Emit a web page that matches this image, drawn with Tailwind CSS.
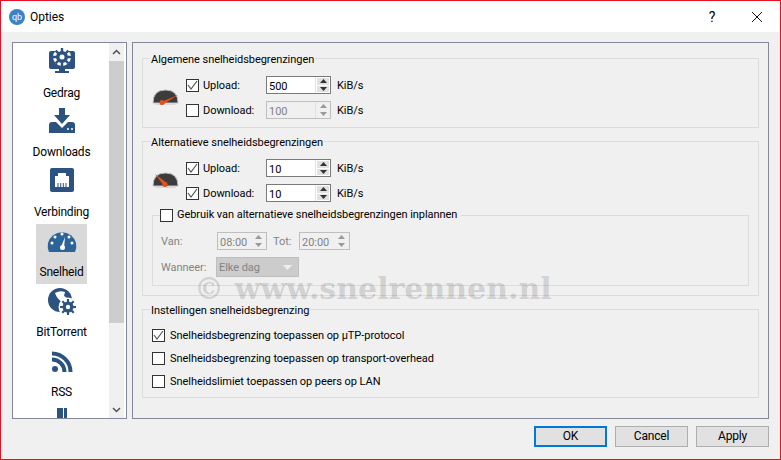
<!DOCTYPE html>
<html lang="nl">
<head>
<meta charset="UTF-8" />
<title>Opties</title>
<script src="https://cdn.jsdelivr.net/npm/@tailwindcss/browser@4"></script>
</head>
<body class="w-[781px] h-[460px] overflow-hidden font-['Roboto','Liberation_Sans',sans-serif] text-[11px] tracking-[-0.05px] leading-[16px] text-black">
<div class="relative w-[781px] h-[460px] border border-[#e81123] bg-[#f0f0f0] flex flex-col">

  <!-- title bar -->
  <div class="h-[31px] bg-white flex items-center shrink-0">
    <div class="ml-[8px] w-[16px] h-[16px] rounded-full bg-[#3b82c9] text-white text-[9px] leading-[16px] text-center">qb</div>
    <span class="ml-[5px] text-[12px]">Opties</span>
    <span class="ml-auto text-[14px] w-[20px] text-center">?</span>
    <svg class="ml-[29px] mr-[17px]" width="12" height="12" viewBox="0 0 12 12"><path d="M1 1 L11 11 M11 1 L1 11" stroke="#111" stroke-width="1" fill="none"/></svg>
  </div>

  <div class="flex-1 flex flex-col pt-[10px] pl-[11px] pr-[11px] pb-[12px]">
    <div class="h-[377px] flex gap-[5px]">

      <!-- category list -->
      <div class="w-[115px] h-full border border-[#82879a] bg-white flex overflow-hidden">
        <div class="w-[96px] pl-[23px] pt-[1px] h-full overflow-hidden text-[12px] tracking-[-0.2px]">
          <div class="w-[51px] h-[60px] flex flex-col items-center">
            <svg class="mt-[2px]" width="28" height="28" viewBox="0 0 28 28"><rect x="1" y="5" width="26" height="18" rx="2" fill="#2c5380"/><rect x="11" y="23" width="6" height="3" fill="#2c5380"/><rect x="7" y="25" width="14" height="2" fill="#2c5380"/><circle cx="14" cy="11" r="9" fill="#fff"/><path d="M14 2 V20 M5 11 H23 M7.600 4.600 L20.400 17.400 M20.400 4.600 L7.600 17.400" stroke="#2c5380" stroke-width="2.400"/><circle cx="14" cy="11" r="6" fill="#2c5380"/><circle cx="14" cy="11" r="2.500" fill="#fff"/></svg>
            <span class="mt-[11px]">Gedrag</span>
          </div>
          <div class="w-[51px] h-[60px] flex flex-col items-center">
            <svg class="mt-[4px]" width="28" height="26" viewBox="0 0 28 26"><path d="M11 0 H17 V7 H22 L14 16 L6 7 H11 Z" fill="#2c5380"/><path d="M1 17 Q1 14 4 14 H8 L14 20 L20 14 H24 Q27 14 27 17 V25 H1 Z" fill="#2c5380"/><circle cx="20" cy="21" r="1" fill="#fff"/><circle cx="24" cy="21" r="1" fill="#fff"/></svg>
            <span class="mt-[10px] whitespace-nowrap">Downloads</span>
          </div>
          <div class="w-[51px] h-[60px] flex flex-col items-center">
            <svg class="mt-[3px]" width="26" height="26" viewBox="0 0 26 26"><rect x="1" y="1" width="24" height="24" rx="2" fill="#2c5380"/><path d="M6 9 H9 V6 H17 V9 H20 V20 H6 Z" fill="#fff"/><path d="M9 16 V20 M11.700 16 V20 M14.300 16 V20 M17 16 V20" stroke="#2c5380" stroke-width="1"/></svg>
            <span class="mt-[11px] whitespace-nowrap">Verbinding</span>
          </div>
          <div class="w-[51px] h-[60px] flex flex-col items-center bg-[#d9d9d9]">
            <svg class="mt-[5px]" width="30" height="24" viewBox="0 0 30 24"><path d="M2 23 Q0 19 1 14 A14.500 14.500 0 0 1 29 14 Q30 19 28 23 Z" fill="#2c6399"/><circle cx="15" cy="5" r="1.500" fill="#fff"/><circle cx="8" cy="8" r="1.500" fill="#fff"/><circle cx="22" cy="8" r="1.500" fill="#fff"/><circle cx="5" cy="14" r="1.500" fill="#fff"/><circle cx="25" cy="14" r="1.500" fill="#fff"/><path d="M14 18 L18 8 L17 19 Z" fill="#fff"/><circle cx="15.500" cy="18.500" r="2.500" fill="#fff"/></svg>
            <span class="mt-[11px]">Snelheid</span>
          </div>
          <div class="w-[51px] h-[60px] flex flex-col items-center">
            <svg class="mt-[3px]" width="30" height="30" viewBox="0 0 30 30"><circle cx="13" cy="13" r="12" fill="#2c5380"/><path d="M8 6 Q13 3 18 5 L17 9 Q20 10 21 14 L15 15 Q10 12 8 6 Z" fill="#fff"/><circle cx="21" cy="20" r="9.500" fill="#fff"/><path d="M21 12 V28 M13 20 H29 M15.300 14.300 L26.700 25.700 M26.700 14.300 L15.300 25.700" stroke="#2c5380" stroke-width="2.200"/><circle cx="21" cy="20" r="5.500" fill="#2c5380"/><circle cx="21" cy="20" r="2.200" fill="#fff"/></svg>
            <span class="mt-[7px] whitespace-nowrap">BitTorrent</span>
          </div>
          <div class="w-[51px] h-[60px] flex flex-col items-center">
            <svg class="mt-[6px]" width="24" height="24" viewBox="0 0 24 24"><circle cx="5" cy="19" r="3" fill="#2c5380"/><path d="M2 9.500 A12.500 12.500 0 0 1 14.500 22 M2 3.500 A18.500 18.500 0 0 1 20.500 22" fill="none" stroke="#2c5380" stroke-width="4"/></svg>
            <span class="mt-[10px]">RSS</span>
          </div>
          <div class="w-[51px] h-[12px] flex justify-center">
            <svg class="mt-[4px]" width="12" height="12" viewBox="0 0 12 12"><rect x="1" y="0" width="10" height="12" fill="#2c5380"/><rect x="7" y="0" width="1" height="12" fill="#fff"/></svg>
          </div>
        </div>
        <!-- scrollbar -->
        <div class="w-[15px] h-full bg-[#f0f0f0] flex flex-col">
          <div class="h-[18px] flex items-center justify-center"><svg width="9" height="6" viewBox="0 0 9 6"><path d="M1 5 L4.500 1.500 L8 5" stroke="#505050" stroke-width="1.500" fill="none"/></svg></div>
          <div class="h-[262px] bg-[#cdcdcd]"></div>
          <div class="flex-1"></div>
          <div class="h-[17px] flex items-center justify-center"><svg width="9" height="6" viewBox="0 0 9 6"><path d="M1 1 L4.500 4.500 L8 1" stroke="#505050" stroke-width="1.500" fill="none"/></svg></div>
        </div>
      </div>

      <!-- settings page -->
      <div class="w-[637px] h-full border border-[#82879a] px-[9px] pt-[7px] flex flex-col gap-[5px]">

        <fieldset class="border border-[#dcdcdc] pb-[8px]">
          <legend class="ml-[7px] px-[1px] h-[16px] leading-[19px]">Algemene snelheidsbegrenzingen</legend>
          <div class="flex items-center pt-[10px] pl-[9px]">
            <svg width="27" height="18" viewBox="0 1 27 18"><path d="M1 15 Q1 2 13.500 2 Q26 2 26 15 Z" fill="#3c3c3c" stroke="#bdbdbd"/><path d="M2 15 H25 Q24 17 22 17 H5 Q3 17 2 15 Z" fill="#d8d8d8"/><path d="M9 14 L26 7 L11 16.500 Z" fill="#e2511c"/><circle cx="10" cy="14.500" r="2.500" fill="#e2511c"/></svg>
            <div class="ml-[7px] flex flex-col gap-[7px]">
              <div class="flex items-center h-[18px]">
                <div class="w-[13px] h-[13px] border border-[#333] bg-white"><svg width="11" height="11" viewBox="0 0 11 11"><path d="M1 5 L4 9 L10 1" stroke="#555" stroke-width="1.200" fill="none"/></svg></div>
                <span class="ml-[4px] w-[63px] pt-[1px]">Upload:</span>
                <div class="w-[65px] h-[18px] border border-[#7a7a7a] bg-white flex">
                  <span class="flex-1 pl-[2px] leading-[19px]">500</span>
                  <div class="w-[15px] flex flex-col gap-[1px] p-[1px] border-l border-[#e1e1e1]">
                    <div class="flex-1 bg-[#e1e1e1] flex items-center justify-center"><svg width="7" height="4" viewBox="0 0 7 4"><path d="M0 4 L3.500 0 L7 4 Z" fill="#333"/></svg></div>
                    <div class="flex-1 bg-[#e1e1e1] flex items-center justify-center"><svg width="7" height="4" viewBox="0 0 7 4"><path d="M0 0 L3.500 4 L7 0 Z" fill="#333"/></svg></div>
                  </div>
                </div>
                <span class="ml-[6px] pt-[2px]">KiB/s</span>
              </div>
              <div class="flex items-center h-[18px]">
                <div class="w-[13px] h-[13px] border border-[#333] bg-white"></div>
                <span class="ml-[4px] w-[63px] pt-[1px]">Download:</span>
                <div class="w-[65px] h-[18px] border border-[#bfbfbf] bg-[#f0f0f0] flex">
                  <span class="flex-1 pl-[2px] leading-[19px] text-[#838383]">100</span>
                  <div class="w-[15px] flex flex-col gap-[1px] p-[1px] border-l border-[#e1e1e1]">
                    <div class="flex-1 flex items-center justify-center"><svg width="7" height="4" viewBox="0 0 7 4"><path d="M0 4 L3.500 0 L7 4 Z" fill="#999"/></svg></div>
                    <div class="flex-1 flex items-center justify-center"><svg width="7" height="4" viewBox="0 0 7 4"><path d="M0 0 L3.500 4 L7 0 Z" fill="#999"/></svg></div>
                  </div>
                </div>
                <span class="ml-[6px] pt-[2px]">KiB/s</span>
              </div>
            </div>
          </div>
        </fieldset>

        <fieldset class="border border-[#dcdcdc] pb-[9px]">
          <legend class="ml-[7px] px-[1px] h-[16px] leading-[19px]">Alternatieve snelheidsbegrenzingen</legend>
          <div class="flex items-center pt-[10px] pl-[9px]">
            <svg width="27" height="18" viewBox="0 1 27 18"><path d="M1 15 Q1 2 13.500 2 Q26 2 26 15 Z" fill="#3c3c3c" stroke="#bdbdbd"/><path d="M2 15 H25 Q24 17 22 17 H5 Q3 17 2 15 Z" fill="#d8d8d8"/><path d="M3 3 L15 12 L12 15 Z" fill="#e2511c"/><circle cx="13" cy="13.500" r="2.500" fill="#e2511c"/></svg>
            <div class="ml-[7px] flex flex-col gap-[7px]">
              <div class="flex items-center h-[18px]">
                <div class="w-[13px] h-[13px] border border-[#333] bg-white"><svg width="11" height="11" viewBox="0 0 11 11"><path d="M1 5 L4 9 L10 1" stroke="#555" stroke-width="1.200" fill="none"/></svg></div>
                <span class="ml-[4px] w-[63px] pt-[1px]">Upload:</span>
                <div class="w-[65px] h-[18px] border border-[#7a7a7a] bg-white flex">
                  <span class="flex-1 pl-[2px] leading-[19px]">10</span>
                  <div class="w-[15px] flex flex-col gap-[1px] p-[1px] border-l border-[#e1e1e1]">
                    <div class="flex-1 bg-[#e1e1e1] flex items-center justify-center"><svg width="7" height="4" viewBox="0 0 7 4"><path d="M0 4 L3.500 0 L7 4 Z" fill="#333"/></svg></div>
                    <div class="flex-1 bg-[#e1e1e1] flex items-center justify-center"><svg width="7" height="4" viewBox="0 0 7 4"><path d="M0 0 L3.500 4 L7 0 Z" fill="#333"/></svg></div>
                  </div>
                </div>
                <span class="ml-[6px] pt-[2px]">KiB/s</span>
              </div>
              <div class="flex items-center h-[18px]">
                <div class="w-[13px] h-[13px] border border-[#333] bg-white"><svg width="11" height="11" viewBox="0 0 11 11"><path d="M1 5 L4 9 L10 1" stroke="#555" stroke-width="1.200" fill="none"/></svg></div>
                <span class="ml-[4px] w-[63px] pt-[1px]">Download:</span>
                <div class="w-[65px] h-[18px] border border-[#7a7a7a] bg-white flex">
                  <span class="flex-1 pl-[2px] leading-[19px]">10</span>
                  <div class="w-[15px] flex flex-col gap-[1px] p-[1px] border-l border-[#e1e1e1]">
                    <div class="flex-1 bg-[#e1e1e1] flex items-center justify-center"><svg width="7" height="4" viewBox="0 0 7 4"><path d="M0 4 L3.500 0 L7 4 Z" fill="#333"/></svg></div>
                    <div class="flex-1 bg-[#e1e1e1] flex items-center justify-center"><svg width="7" height="4" viewBox="0 0 7 4"><path d="M0 0 L3.500 4 L7 0 Z" fill="#333"/></svg></div>
                  </div>
                </div>
                <span class="ml-[6px] pt-[2px]">KiB/s</span>
              </div>
            </div>
          </div>

          <fieldset class="mt-[5px] mx-[9px] border border-[#dcdcdc] pb-[8px]">
            <legend class="ml-[7px] pr-[4px] h-[16px]">
              <div class="flex items-center h-[16px]">
                <div class="w-[13px] h-[13px] border border-[#333] bg-white"></div>
                <span class="ml-[4px]">Gebruik van alternatieve snelheidsbegrenzingen inplannen</span>
              </div>
            </legend>
            <div class="pt-[9px] pl-[8px] flex flex-col gap-[7px] text-[#838383]">
              <div class="flex items-center h-[18px]">
                <span class="w-[56px] pt-[1px]">Van:</span>
                <div class="w-[50px] h-[18px] border border-[#bfbfbf] flex">
                  <span class="flex-1 pl-[2px] leading-[19px]">08:00</span>
                  <div class="w-[15px] flex flex-col gap-[1px] p-[1px]">
                    <div class="flex-1 flex items-center justify-center"><svg width="7" height="4" viewBox="0 0 7 4"><path d="M0 4 L3.500 0 L7 4 Z" fill="#999"/></svg></div>
                    <div class="flex-1 flex items-center justify-center"><svg width="7" height="4" viewBox="0 0 7 4"><path d="M0 0 L3.500 4 L7 0 Z" fill="#999"/></svg></div>
                  </div>
                </div>
                <span class="ml-[6px] w-[26px] pt-[1px]">Tot:</span>
                <div class="w-[51px] h-[18px] border border-[#bfbfbf] flex">
                  <span class="flex-1 pl-[2px] leading-[19px]">20:00</span>
                  <div class="w-[15px] flex flex-col gap-[1px] p-[1px]">
                    <div class="flex-1 flex items-center justify-center"><svg width="7" height="4" viewBox="0 0 7 4"><path d="M0 4 L3.500 0 L7 4 Z" fill="#999"/></svg></div>
                    <div class="flex-1 flex items-center justify-center"><svg width="7" height="4" viewBox="0 0 7 4"><path d="M0 0 L3.500 4 L7 0 Z" fill="#999"/></svg></div>
                  </div>
                </div>
              </div>
              <div class="flex items-center h-[20px]">
                <span class="w-[55px] pt-[1px]">Wanneer:</span>
                <div class="w-[83px] h-[20px] border border-[#bfbfbf] bg-[#cccccc] flex items-center pl-[2px]">
                  <span class="flex-1 pt-[1px]">Elke dag</span>
                  <svg class="mr-[6px]" width="9" height="5" viewBox="0 0 9 5"><path d="M0 0 L4.500 5 L9 0 Z" fill="#eeeeee"/></svg>
                </div>
              </div>
            </div>
          </fieldset>
        </fieldset>

        <fieldset class="border border-[#dcdcdc] pb-[9px]">
          <legend class="ml-[7px] px-[1px] h-[16px] leading-[19px]">Instellingen snelheidsbegrenzing</legend>
          <div class="pt-[12px] pl-[9px] flex flex-col gap-[10px]">
            <div class="flex items-center h-[13px]">
              <div class="w-[13px] h-[13px] border border-[#333] bg-white"><svg width="11" height="11" viewBox="0 0 11 11"><path d="M1 5 L4 9 L10 1" stroke="#555" stroke-width="1.200" fill="none"/></svg></div>
              <span class="ml-[5px]">Snelheidsbegrenzing toepassen op µTP-protocol</span>
            </div>
            <div class="flex items-center h-[13px]">
              <div class="w-[13px] h-[13px] border border-[#333] bg-white"></div>
              <span class="ml-[5px]">Snelheidsbegrenzing toepassen op transport-overhead</span>
            </div>
            <div class="flex items-center h-[13px]">
              <div class="w-[13px] h-[13px] border border-[#333] bg-white"></div>
              <span class="ml-[5px]">Snelheidslimiet toepassen op peers op LAN</span>
            </div>
          </div>
        </fieldset>
      </div>
    </div>

    <!-- dialog buttons -->
    <div class="mt-[7px] flex justify-end gap-[8px] text-[12px] tracking-[-0.2px]">
      <div class="w-[73px] h-[21px] border-2 border-[#0078d7] bg-[#e1e1e1] text-center leading-[17px]">OK</div>
      <div class="w-[73px] h-[21px] border border-[#adadad] bg-[#e1e1e1] text-center leading-[19px]">Cancel</div>
      <div class="w-[73px] h-[21px] border border-[#adadad] bg-[#e1e1e1] text-center leading-[19px]">Apply</div>
    </div>
  </div>

  <!-- watermark over the dialog -->
  <div class="absolute left-[193px] top-[277px] pointer-events-none whitespace-nowrap font-['DejaVu_Serif',serif] font-bold text-[30px] tracking-normal leading-[22px] text-black/15">© www.snelrennen.nl</div>
</div>
</body>
</html>
